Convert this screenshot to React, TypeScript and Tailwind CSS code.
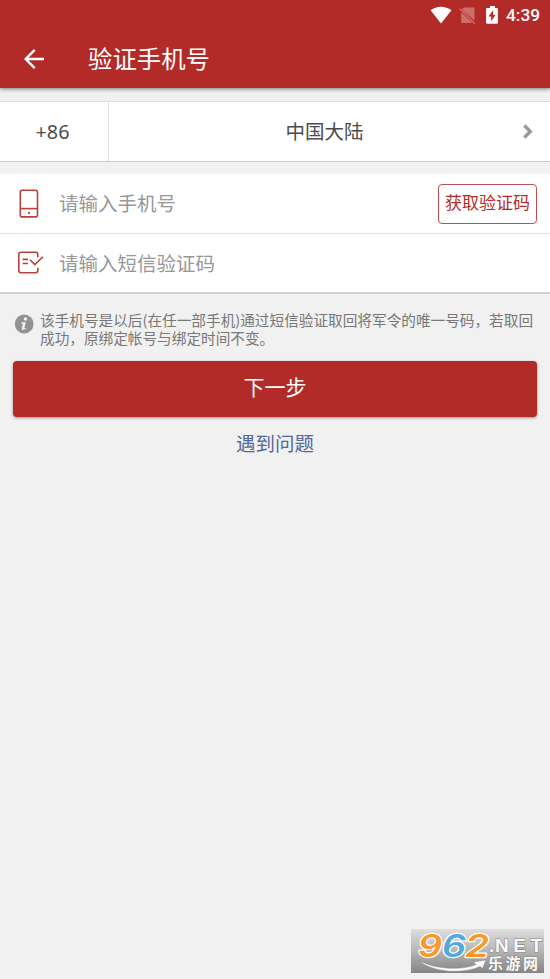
import React from "react";

function StatusBar() {
  return (
    <div className="flex h-[30px] items-center justify-end pr-[10px] text-white">
      <svg width="72" height="20" viewBox="0 0 72 20" className="mr-[4px] mt-[1px] shrink-0">
        <path d="M.6 4.3C6.7-.5 15.3-.5 21.5 4.3L11 17.4Z" fill="#fff" />
        <path d="M34 1.5H44.5V14.5L31.8 3.6Z M31.2 6.2L42.4 17H32.2Q31.2 17 31.2 16Z" fill="#cf6d6b" />
        <path d="M29.6 2.6L44.8 17.8" stroke="#cf6d6b" strokeWidth="1.4" />
        <path
          fillRule="evenodd"
          d="M60 0H65V1.9H66.7Q67.9 1.9 67.9 3V16.7Q67.9 17.8 66.7 17.8H57.3Q56.1 17.8 56.1 16.7V3Q56.1 1.9 57.3 1.9H60ZM63.1 4.3L58.5 10.6H61.2V15.3L65.5 9H63.1Z"
          fill="#fff"
        />
      </svg>
      <span className="w-[34px] whitespace-nowrap font-[Roboto,sans-serif] text-[17.3px] font-medium leading-[20px]">4:39</span>
    </div>
  );
}

function AppBar() {
  return (
    <div className="flex h-[58px] items-center">
      <svg width="20" height="20" viewBox="0 0 20 20" className="ml-[24px] shrink-0" fill="none" stroke="#fff" strokeWidth="2.4">
        <path d="M10.7 .9L1.7 10L10.7 19.1M1.9 10H20" />
      </svg>
      <h1 className="ml-[44px] pb-[2px] text-[24.4px] font-normal leading-[30px] text-white">验证手机号</h1>
    </div>
  );
}

function PhoneIcon() {
  return (
    <svg width="20" height="30" viewBox="0 0 20 30" fill="none" stroke="#b8403e" strokeWidth="1.6" className="shrink-0">
      <rect x="1.3" y="1.3" width="17.2" height="26.6" rx="2" />
      <path d="M1.3 19.6H18.5" />
      <circle cx="10" cy="23.9" r="1.1" fill="#b8403e" stroke="none" />
    </svg>
  );
}

function CodeIcon() {
  return (
    <svg width="27" height="24" viewBox="0 0 27 24" fill="none" stroke="#b8403e" strokeWidth="1.6" className="shrink-0">
      <path d="M20.8 6.3V3.4Q20.8 1.2 18.6 1.2H4Q1.8 1.2 1.8 3.4V19.6Q1.8 21.8 4 21.8H18.6Q20.8 21.8 20.8 19.6V16.8" />
      <path d="M5.6 8.4H11M5.6 12.5H11M13 8.7L17.9 13.6L25.9 5.8" />
    </svg>
  );
}

function Watermark() {
  return (
    <div className="absolute left-[411px] top-[929px] h-[44px] w-[133px] bg-linear-to-b from-[#dedede] via-[#b5b5b5] to-[#858585]">
      <svg width="133" height="44" viewBox="0 0 133 44">
        <path d="M7 31C22 40 50 42 65 35.5L62.5 33L75 31L71.5 39.5L69 37.5C50 46 20 43 7 31Z" fill="#fafafa" stroke="#777" strokeWidth=".4" />
        <g fontFamily="Inter, sans-serif" fontWeight="600" fontStyle="italic" fontSize="31" stroke="#fff" strokeWidth="2.4" strokeLinejoin="round" paintOrder="stroke">
          <text x="7" y="27.5" textLength="24" lengthAdjust="spacingAndGlyphs" fill="#f7992c">9</text>
          <text x="31" y="27.5" textLength="24" lengthAdjust="spacingAndGlyphs" fill="#51a9df">6</text>
          <text x="54" y="27.5" textLength="24" lengthAdjust="spacingAndGlyphs" fill="#f7992c">2</text>
        </g>
        <g fill="#fafafa" stroke="#888" strokeWidth="1.2" paintOrder="stroke">
          <text x="78" y="22.5" fontFamily="Liberation Sans, sans-serif" fontWeight="bold" fontSize="19">.</text>
          <text x="84" y="22.5" fontFamily="Liberation Sans, sans-serif" fontWeight="bold" fontSize="19" textLength="47">NET</text>
          <text x="77" y="39.5" fontFamily="Noto Sans CJK SC" fontWeight="bold" fontSize="15" textLength="50">乐游网</text>
        </g>
      </svg>
    </div>
  );
}

export default function App() {
  return (
    <div className="relative flex h-[979px] w-[550px] flex-col overflow-hidden bg-[#f1f1f1] font-['Noto_Sans_CJK_SC',sans-serif]">
      <header className="h-[88px] shrink-0 bg-[#b32b28] shadow-[0_1px_4px_rgba(0,0,0,0.5)]">
        <StatusBar />
        <AppBar />
      </header>

      <section className="mt-[13px] flex h-[61px] shrink-0 border-b border-t border-b-[#cbcbcb] border-t-[#dedede] bg-white text-[#4c4c4c]">
        <div className="flex w-[109px] items-center justify-center border-r border-[#dedede] pr-[3px] font-['Noto_Sans',sans-serif] text-[19.8px]">+86</div>
        <div className="flex flex-1 items-center">
          <span className="ml-[19px] flex-1 pb-px text-center text-[19.5px] leading-[28px]">中国大陆</span>
          <svg width="10" height="15" viewBox="0 0 10 15" className="ml-[2px] mr-[17px]" fill="none" stroke="#9b9b9b" strokeWidth="3.4">
            <path d="M1.3 1.5L7.3 7.5L1.3 13.5" />
          </svg>
        </div>
      </section>

      <section className="mt-[12px] h-[120px] shrink-0 border-b-2 border-[#d1d1d1] bg-white text-[19.5px] text-[#979797]">
        <div className="flex h-[60px] items-center border-b border-[#e1e1e1] pl-[19px] pr-[13px]">
          <PhoneIcon />
          <span className="ml-[20px] flex-1 pb-px leading-[28px]">请输入手机号</span>
          <button className="h-[40px] w-[99px] whitespace-nowrap rounded-[4px] border border-[#bd504e] pb-[4px] text-center text-[17px] leading-[34px] text-[#b32b28]">获取验证码</button>
        </div>
        <div className="flex h-[58px] items-center pl-[17px]">
          <CodeIcon />
          <span className="ml-[15px] leading-[28px]">请输入短信验证码</span>
        </div>
      </section>

      <div className="mt-[17px] flex h-[36px] shrink-0 items-start pl-[14px]">
        <svg width="20" height="20" viewBox="0 0 20 20" className="mt-[3px] shrink-0">
          <circle cx="10.2" cy="10" r="9.4" fill="#929292" />
          <circle cx="11.4" cy="5" r="1.7" fill="#f1f1f1" />
          <path d="M7.4 8.3H11.8L10.3 14.2Q10.2 14.9 12.2 14.1L12 15.1Q7.3 17 7.7 14.3L8.9 9.4H7.2Z" fill="#f1f1f1" />
        </svg>
        <p className="ml-[6px] whitespace-nowrap text-[14.65px] leading-[17.5px] text-[#777]">
          该手机号是以后(在任一部手机)通过短信验证取回将军令的唯一号码，若取回
          <br />
          成功，原绑定帐号与绑定时间不变。
        </p>
      </div>

      <button className="mx-[13px] mt-[14px] h-[56px] shrink-0 rounded-[4px] bg-[#b32b28] pb-[6px] text-[21px] leading-[30px] text-white shadow-[0_1px_3px_rgba(0,0,0,0.4)]">下一步</button>
      <a className="mt-[12px] self-center text-[19.5px] leading-[28px] text-[#52699b]">遇到问题</a>

      <Watermark />
    </div>
  );
}
